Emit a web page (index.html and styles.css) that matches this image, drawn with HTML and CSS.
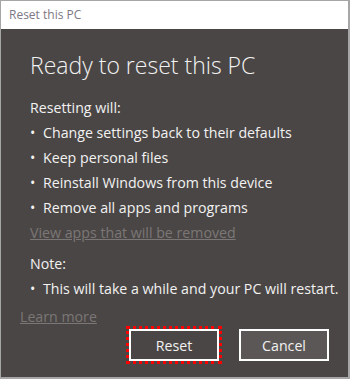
FILE: index.html
```html
<!DOCTYPE html>
<html>
<head>
    <title>Reset this PC</title>
    <link rel="stylesheet" href="styles.css">
</head>
<body>
    <div class="window">
        <div class="titlebar">Reset this PC</div>
        <div class="content">
            <h1>Ready to reset this PC</h1>
            <p class="line">Resetting will:</p>
            <ul class="bullets">
                <li>Change settings back to their defaults</li>
                <li>Keep personal files</li>
                <li>Reinstall Windows from this device</li>
                <li>Remove all apps and programs</li>
            </ul>
            <a class="link" href="#">View apps that will be removed</a>
            <p class="line note">Note:</p>
            <ul class="bullets">
                <li>This will take a while and your PC will restart.</li>
            </ul>
            <a class="link learn" href="#">Learn more</a>
            <div class="actions">
                <span class="focus"><button class="btn">Reset</button></span>
                <button class="btn btn-cancel">Cancel</button>
            </div>
        </div>
    </div>
</body>
</html>
```

FILE: styles.css
```css
body {
    margin: 0;
    font-family: "Open Sans", "Noto Sans", sans-serif;
}
.window {
    width: 350px;
    height: 379px;
    box-sizing: border-box;
    border: 1px solid #a6a6a6;
    border-right-width: 2px;
    border-bottom-width: 2px;
    display: flex;
    flex-direction: column;
    background: #4a4645;
}
.titlebar {
    height: 28px;
    background: #fff;
    color: #7d7884;
    font-size: 12px;
    line-height: 28px;
    padding-left: 8px;
}
.content {
    flex: 1;
    padding: 0 0 0 29px;
    color: #f2f2f2;
    font-size: 14.2px;
}
h1 {
    font-weight: 300;
    font-size: 23px;
    margin: 20px 0 14px;
    line-height: 32px;
}
.line {
    margin: 0;
    line-height: 25px;
}
.bullets {
    list-style: none;
    margin: 0;
    padding: 0;
}
.bullets li {
    line-height: 25px;
    position: relative;
    padding-left: 13px;
}
.bullets li::before {
    content: "\2022";
    position: absolute;
    left: 0;
}
.link {
    display: block;
    color: #7b7776;
    line-height: 25px;
}
.note { margin-top: 6px; }
.learn {
    margin-left: -10px;
    margin-top: 3px;
}
.actions {
    display: flex;
    justify-content: flex-end;
    gap: 17px;
    padding-right: 19px;
    margin-top: -3px;
}
.focus {
    border: 3px dotted #ff0000;
}
.btn {
    width: 90px;
    height: 32px;
    border: 2px solid #fff;
    background: #4a4645;
    color: #f2f2f2;
    font-family: inherit;
    font-size: 14.2px;
    display: block;
}
.btn-cancel {
    background: #5b5756;
    margin-top: 3px;
}
```
